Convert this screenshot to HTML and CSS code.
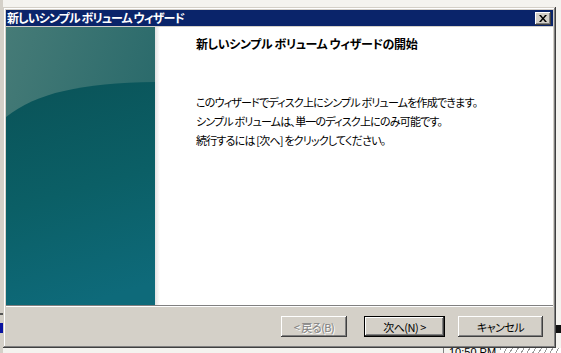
FILE: index.html
```html
<!DOCTYPE html>
<html lang="ja">
<head>
    <meta charset="UTF-8">
    <title>新しいシンプル ボリューム ウィザード</title>
    <link rel="stylesheet" href="styles.css">
</head>
<body>
    <div class="desktop">
        <div class="bg-left-line"></div>
        <div class="bg-left-blue"></div>
        <div class="bg-right-bar"></div>
        <div class="bg-clock">10:50 PM</div>
        <div class="bg-hatch"></div>

        <div class="window">
            <div class="titlebar">
                <span class="title">新しいシンプル ボリューム ウィザード</span>
                <button class="close">
                    <svg width="8" height="7" viewBox="0 0 8 7">
                        <path d="M0 0h2l2 2.5L6 0h2L5 3.5 8 7H6L4 4.5 2 7H0l3-3.5z" fill="#000"/>
                    </svg>
                </button>
            </div>
            <div class="main">
                <div class="banner">
                    <svg width="149" height="278" viewBox="0 0 149 278">
                        <defs>
                            <linearGradient id="top" x1="0" y1="0" x2="1" y2="0.6">
                                <stop offset="0" stop-color="#467b77"/>
                                <stop offset="1" stop-color="#256769"/>
                            </linearGradient>
                            <linearGradient id="low" x1="0.3" y1="0" x2="0.5" y2="1">
                                <stop offset="0" stop-color="#0a5459"/>
                                <stop offset="0.5" stop-color="#0b5f66"/>
                                <stop offset="1" stop-color="#0e6a7a"/>
                            </linearGradient>
                        </defs>
                        <rect width="149" height="278" fill="url(#top)"/>
                        <path d="M0 90 C30 66 75 56 149 55 V278 H0 Z" fill="url(#low)"/>
                    </svg>
                </div>
                <div class="content">
                    <h1>新しいシンプル ボリューム ウィザードの開始</h1>
                    <p class="first">このウィザードでディスク上にシンプル ボリュームを作成できます。</p>
                    <p>シンプル ボリュームは、単一のディスク上にのみ可能です。</p>
                    <p>続行するには [次へ] をクリックしてください。</p>
                </div>
            </div>
            <div class="footer">
                <button class="btn btn-back" disabled>&lt; 戻る(B)</button>
                <button class="btn btn-next">次へ(N) &gt;</button>
                <button class="btn btn-cancel">キャンセル</button>
            </div>
        </div>
    </div>
</body>
</html>
```

FILE: styles.css
```css
body {
    margin: 0;
    padding: 0;
    font-family: "Noto Sans CJK JP", sans-serif;
    font-feature-settings: "palt";
    font-size: 12px;
    background-color: #f2f1ed;
}
.desktop {
    position: relative;
    width: 561px;
    height: 353px;
    overflow: hidden;
    background: linear-gradient(to right, #d4d0c8 3px, #f4f3ef 3px);
}
.bg-left-line {
    position: absolute;
    left: 0;
    top: 313px;
    width: 4px;
    height: 2px;
    background-color: #555;
}
.bg-left-blue {
    position: absolute;
    left: 0;
    top: 323px;
    width: 4px;
    height: 10px;
    background-color: #0a14a0;
}
.bg-right-bar {
    position: absolute;
    left: 555px;
    top: 325px;
    width: 6px;
    height: 8px;
    background-color: #111;
}
.bg-clock {
    position: absolute;
    left: 443px;
    top: 347px;
    width: 118px;
    height: 6px;
    border-left: 1px solid #808080;
    padding-left: 5px;
    font-family: "Liberation Sans", sans-serif;
    font-size: 11px;
    line-height: 11px;
    color: #000;
}
.bg-hatch {
    position: absolute;
    left: 500px;
    top: 348px;
    width: 61px;
    height: 5px;
    background: repeating-linear-gradient(-60deg, #fff 0 4px, #9a9a9a 4px 5px);
}

.window {
    position: absolute;
    left: 3px;
    top: 7px;
    width: 553px;
    height: 341px;
    box-sizing: border-box;
    padding: 3px;
    display: flex;
    flex-direction: column;
    background-color: #d4d0c8;
    box-shadow: inset -1px -1px #404040, inset 1px 1px #d4d0c8,
        inset -2px -2px #808080, inset 2px 2px #fff;
}
.titlebar {
    height: 16px;
    margin-bottom: 1px;
    padding: 0 2px 0 1px;
    display: flex;
    align-items: center;
    justify-content: space-between;
    background-color: #0a246a;
}
.title {
    color: #fff;
    font-weight: bold;
    font-size: 12px;
    letter-spacing: -0.9px;
    line-height: 16px;
}
.close {
    width: 16px;
    height: 13px;
    padding: 0;
    border: none;
    display: flex;
    align-items: center;
    justify-content: center;
    background-color: #d4d0c8;
    box-shadow: inset -1px -1px #404040, inset 1px 1px #fff,
        inset -2px -2px #808080;
}
.main {
    height: 278px;
    display: flex;
}
.banner {
    width: 149px;
    flex-shrink: 0;
}
.banner svg {
    display: block;
}
.content {
    flex: 1;
    padding: 9px 0 0 41px;
    background: linear-gradient(to right, #e2e2e2, #fff 5px);
}
.content h1 {
    margin: 0;
    font-size: 12px;
    font-weight: bold;
    letter-spacing: -0.4px;
    line-height: 16px;
}
.content p {
    margin: 0;
    font-size: 11px;
    letter-spacing: -0.8px;
    line-height: 19px;
}
.content .first {
    margin-top: 41px;
}
.footer {
    flex: 1;
    padding: 10px 10px 0 0;
    display: flex;
    justify-content: flex-end;
    align-items: flex-start;
    border-top: 1px solid #808080;
    box-shadow: inset 0 1px #fff;
}
.btn {
    height: 21px;
    padding: 0;
    border: none;
    font-family: "Noto Sans CJK JP", sans-serif;
    font-feature-settings: "palt";
    font-size: 11px;
    letter-spacing: -0.5px;
    color: #000;
    background-color: #d4d0c8;
    box-shadow: inset -1px -1px #404040, inset 1px 1px #fff,
        inset -2px -2px #808080;
}
.btn-back {
    width: 66px;
    margin-right: 17px;
    color: #808080;
    text-shadow: 1px 1px #fff;
}
.btn-next {
    width: 81px;
    margin-right: 13px;
    box-shadow: inset 0 0 0 1px #000, inset -2px -2px #404040,
        inset 2px 2px #fff, inset -3px -3px #808080;
}
.btn-cancel {
    width: 85px;
}
```
